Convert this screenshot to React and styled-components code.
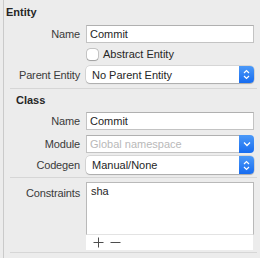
import React from 'react';
import styled, { createGlobalStyle } from 'styled-components';

const Global = createGlobalStyle`
  html, body { margin: 0; padding: 0; background: #ececec; }
  body {
    font-family: "Liberation Sans", Arial, sans-serif;
    font-size: 11px;
    color: #262626;
    -webkit-font-smoothing: antialiased;
  }
`;

const Panel = styled.div`
  box-sizing: border-box;
  width: 257px;
  height: 258px;
  margin-left: 3px;
  border-left: 1px solid #cacaca;
  display: flex;
  flex-direction: column;
  overflow: hidden;
`;

const Header = styled.div`
  height: 14px;
  line-height: 14px;
  font-weight: bold;
  font-size: 11px;
  color: #262626;
  padding-left: ${p => p.$indent}px;
  margin-top: ${p => p.$top}px;
`;

const Row = styled.div`
  display: grid;
  grid-template-columns: 76px 168px;
  column-gap: 6px;
  align-items: center;
  height: ${p => p.$h}px;
  margin-top: ${p => p.$top}px;
`;

const Label = styled.div`
  text-align: right;
  color: #3a3a3a;
  white-space: nowrap;
  letter-spacing: -0.15px;
  align-self: ${p => (p.$top ? 'start' : 'center')};
  padding-top: ${p => (p.$top ? 5 : 0)}px;
`;

const TextField = styled.div`
  box-sizing: border-box;
  height: 100%;
  background: #fff;
  border: 1px solid #c3c3c3;
  border-top-color: #b0b0b0;
  padding: 0 3px;
  display: flex;
  align-items: center;
  color: ${p => (p.$placeholder ? '#b9b9b9' : '#262626')};
  white-space: nowrap;
  overflow: hidden;
`;

const Popup = styled.div`
  box-sizing: border-box;
  height: 100%;
  display: flex;
  background: #fff;
  border-radius: 4px;
  box-shadow: 0 0 0 0.5px rgba(0, 0, 0, 0.18), 0 1px 1px rgba(0, 0, 0, 0.2);
  overflow: hidden;
`;

const PopupText = styled.div`
  flex: 1;
  display: flex;
  align-items: center;
  padding-left: 6px;
  white-space: nowrap;
`;

const Combo = styled.div`
  height: 100%;
  display: flex;
`;

const ComboField = styled(TextField)`
  flex: 1;
  border-right: none;
`;

const Stepper = styled.div`
  width: 15px;
  height: 100%;
  flex: none;
  display: flex;
  align-items: center;
  justify-content: center;
  background: linear-gradient(#4b99f8, #176cf0);
  border-radius: ${p => (p.$combo ? '0 4px 4px 0' : '0')};
`;

const CheckWrap = styled.label`
  display: flex;
  align-items: center;
  gap: 5px;
  color: #262626;
`;

const Box = styled.span`
  box-sizing: border-box;
  width: 11px;
  height: 11px;
  background: #fff;
  border-radius: 3px;
  box-shadow: 0 0 0 0.5px rgba(0, 0, 0, 0.3), 0 0.5px 1px rgba(0, 0, 0, 0.2);
  margin-left: 1px;
`;

const Separator = styled.div`
  height: 1px;
  background: #d6d6d6;
  margin: ${p => p.$top}px 3px 0 6px;
`;

const Table = styled.div`
  display: flex;
  flex-direction: column;
  height: 100%;
`;

const TableBody = styled.div`
  box-sizing: border-box;
  flex: 1;
  background: #fff;
  border: 1px solid #b9b9b9;
  border-bottom: 1px solid #e3e3e3;
  padding: 2px 4px;
  color: #262626;
`;

const TableBar = styled.div`
  height: 15px;
  background: #fff;
  display: flex;
  align-items: center;
  gap: 6px;
  padding-left: 7px;
  margin-right: 1px;
`;

const BarButton = styled.span`
  width: 11px;
  height: 11px;
  display: flex;
  align-items: center;
  justify-content: center;
`;

const UpDown = () => (
  <svg width="7" height="11" viewBox="0 0 7 11">
    <path d="M1 4 L3.5 1.5 L6 4 M1 7 L3.5 9.5 L6 7" fill="none" stroke="#fff" strokeWidth="1.2" />
  </svg>
);

const Down = () => (
  <svg width="8" height="6" viewBox="0 0 8 6">
    <path d="M1 1.5 L4 4.5 L7 1.5" fill="none" stroke="#fff" strokeWidth="1.3" />
  </svg>
);

const Plus = () => (
  <svg width="11" height="11" viewBox="0 0 11 11">
    <path d="M5.5 0.5 V10.5 M0.5 5.5 H10.5" stroke="#4d4d4d" strokeWidth="1" />
  </svg>
);

const Minus = () => (
  <svg width="11" height="11" viewBox="0 0 11 11">
    <path d="M0.5 5.5 H10.5" stroke="#4d4d4d" strokeWidth="1" />
  </svg>
);

export default function App() {
  return (
    <>
      <Global />
      <Panel>
        <Header $indent={2} $top={5}>Entity</Header>
        <Row $h={18} $top={6}>
          <Label>Name</Label>
          <TextField>Commit</TextField>
        </Row>
        <Row $h={16} $top={3}>
          <span />
          <CheckWrap>
            <Box />
            Abstract Entity
          </CheckWrap>
        </Row>
        <Row $h={17} $top={4}>
          <Label>Parent Entity</Label>
          <Popup>
            <PopupText>No Parent Entity</PopupText>
            <Stepper><UpDown /></Stepper>
          </Popup>
        </Row>
        <Separator $top={5} />
        <Header $indent={12} $top={4}>Class</Header>
        <Row $h={18} $top={5}>
          <Label>Name</Label>
          <TextField>Commit</TextField>
        </Row>
        <Row $h={18} $top={5}>
          <Label>Module</Label>
          <Combo>
            <ComboField $placeholder>Global namespace</ComboField>
            <Stepper $combo><Down /></Stepper>
          </Combo>
        </Row>
        <Row $h={18} $top={3}>
          <Label>Codegen</Label>
          <Popup>
            <PopupText>Manual/None</PopupText>
            <Stepper><UpDown /></Stepper>
          </Popup>
        </Row>
        <Separator $top={3} />
        <Row $h={68} $top={4}>
          <Label $top>Constraints</Label>
          <Table>
            <TableBody>sha</TableBody>
            <TableBar>
              <BarButton><Plus /></BarButton>
              <BarButton><Minus /></BarButton>
            </TableBar>
          </Table>
        </Row>
        <Separator $top={2} />
      </Panel>
    </>
  );
}
